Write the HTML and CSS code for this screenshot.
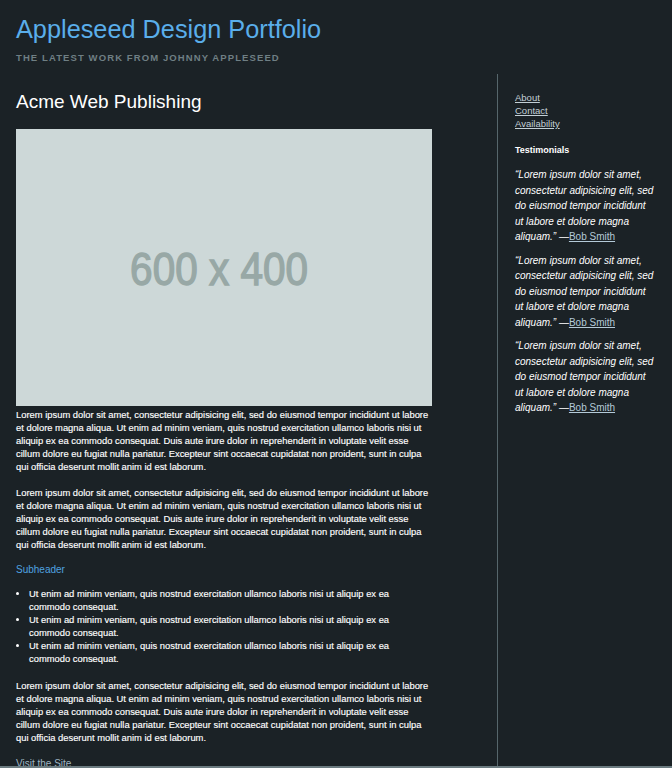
FILE: index.html
```html
<!DOCTYPE html>
<html>
<head>
<meta charset="utf-8">
<link rel="stylesheet" href="styles.css">
</head>
<body>
<header class="masthead">
  <h1 class="site-title">Appleseed Design Portfolio</h1>
  <p class="tagline">The latest work from Johnny Appleseed</p>
</header>
<div class="layout">
  <main class="main">
    <h2 class="project-title">Acme Web Publishing</h2>
    <div class="placeholder"><span>600 x 400</span></div>
    <p>Lorem ipsum dolor sit amet, consectetur adipisicing elit, sed do eiusmod tempor incididunt ut labore et dolore magna aliqua. Ut enim ad minim veniam, quis nostrud exercitation ullamco laboris nisi ut aliquip ex ea commodo consequat. Duis aute irure dolor in reprehenderit in voluptate velit esse cillum dolore eu fugiat nulla pariatur. Excepteur sint occaecat cupidatat non proident, sunt in culpa qui officia deserunt mollit anim id est laborum.</p>
    <p>Lorem ipsum dolor sit amet, consectetur adipisicing elit, sed do eiusmod tempor incididunt ut labore et dolore magna aliqua. Ut enim ad minim veniam, quis nostrud exercitation ullamco laboris nisi ut aliquip ex ea commodo consequat. Duis aute irure dolor in reprehenderit in voluptate velit esse cillum dolore eu fugiat nulla pariatur. Excepteur sint occaecat cupidatat non proident, sunt in culpa qui officia deserunt mollit anim id est laborum.</p>
    <h3 class="subheader">Subheader</h3>
    <ul class="bullets">
      <li>Ut enim ad minim veniam, quis nostrud exercitation ullamco laboris nisi ut aliquip ex ea commodo consequat.</li>
      <li>Ut enim ad minim veniam, quis nostrud exercitation ullamco laboris nisi ut aliquip ex ea commodo consequat.</li>
      <li>Ut enim ad minim veniam, quis nostrud exercitation ullamco laboris nisi ut aliquip ex ea commodo consequat.</li>
    </ul>
    <p>Lorem ipsum dolor sit amet, consectetur adipisicing elit, sed do eiusmod tempor incididunt ut labore et dolore magna aliqua. Ut enim ad minim veniam, quis nostrud exercitation ullamco laboris nisi ut aliquip ex ea commodo consequat. Duis aute irure dolor in reprehenderit in voluptate velit esse cillum dolore eu fugiat nulla pariatur. Excepteur sint occaecat cupidatat non proident, sunt in culpa qui officia deserunt mollit anim id est laborum.</p>
    <p class="visit-line"><a class="visit" href="#">Visit the Site</a></p>
  </main>
  <aside class="sidebar">
    <ul class="nav">
      <li><a href="#">About</a></li>
      <li><a href="#">Contact</a></li>
      <li><a href="#">Availability</a></li>
    </ul>
    <h4 class="side-heading">Testimonials</h4>
    <blockquote class="quote">“Lorem ipsum dolor sit amet, consectetur adipisicing elit, sed do eiusmod tempor incididunt ut labore et dolore magna aliquam.” <span class="cite">—<a href="#">Bob Smith</a></span></blockquote>
    <blockquote class="quote">“Lorem ipsum dolor sit amet, consectetur adipisicing elit, sed do eiusmod tempor incididunt ut labore et dolore magna aliquam.” <span class="cite">—<a href="#">Bob Smith</a></span></blockquote>
    <blockquote class="quote">“Lorem ipsum dolor sit amet, consectetur adipisicing elit, sed do eiusmod tempor incididunt ut labore et dolore magna aliquam.” <span class="cite">—<a href="#">Bob Smith</a></span></blockquote>
  </aside>
</div>
<div class="frame-edge"></div>
</body>
</html>
```

FILE: styles.css
```css
html, body {
  margin: 0;
  padding: 0;
  background: #1b2226;
  height: 100%;
  overflow: hidden;
}
body {
  font-family: "Liberation Sans", Arial, sans-serif;
  color: #ffffff;
  padding: 0 16px;
}
.masthead {
  padding-top: 14px;
}
.site-title {
  margin: 0;
  font-size: 25.3px;
  font-weight: normal;
  color: #5aaeea;
  line-height: 30px;
}
.tagline {
  margin: 8px 0 0;
  font-size: 9.5px;
  font-weight: bold;
  letter-spacing: 1.1px;
  text-transform: uppercase;
  color: #6f7f84;
  line-height: 12px;
}
.layout {
  display: flex;
  margin-top: 10px;
  min-height: 700px;
}
.main {
  width: 416px;
  flex: none;
}
.project-title {
  margin: 16px 0 15px;
  font-size: 19px;
  font-weight: normal;
  line-height: 24px;
}
.placeholder {
  height: 277px;
  background: #cdd8d8;
  display: flex;
  align-items: center;
  justify-content: center;
}
.placeholder span {
  display: inline-block;
  font-family: "Liberation Sans", sans-serif;
  font-weight: normal;
  font-size: 46px;
  color: #98a8a6;
  -webkit-text-stroke: 1.4px #98a8a6;
  padding-top: 2px;
  margin-right: 10px;
  transform: scaleX(0.88);
}
.main p {
  margin: 0 0 13px;
  font-size: 9.4px;
  line-height: 13px;
  -webkit-text-stroke: 0.15px #ffffff;
}
.main p:first-of-type {
  margin-top: 2px;
}
.subheader {
  margin: -1px 0 11px;
  font-size: 10px;
  font-weight: normal;
  color: #4fa3e0;
  line-height: 13px;
}
.bullets {
  margin: 0 0 13px;
  padding-left: 13px;
  font-size: 9.4px;
  line-height: 13.1px;
  -webkit-text-stroke: 0.15px #ffffff;
}
.main .visit-line {
  -webkit-text-stroke: 0;
}
.visit {
  color: #9fb5c2;
  text-decoration: none;
  font-size: 10px;
}
.sidebar {
  margin-left: 65px;
  border-left: 1px solid #56666b;
  padding-left: 17px;
  flex: 1;
}
.nav {
  list-style: none;
  margin: 17px 0 0;
  padding: 0;
  font-size: 9.5px;
  line-height: 13px;
}
.nav a {
  color: #c3d0d6;
}
.side-heading {
  margin: 14px 0 11px;
  font-size: 9px;
  font-weight: bold;
  line-height: 12px;
}
.quote {
  margin: 0 0 8px;
  font-style: italic;
  font-size: 10px;
  line-height: 15.5px;
  max-width: 145px;
}
.cite {
  font-style: normal;
  white-space: nowrap;
}
.quote a {
  color: #b4cad8;
}
.frame-edge {
  position: fixed;
  left: 0;
  right: 0;
  bottom: 0;
  height: 2px;
  background: #6b7b80;
}
```
